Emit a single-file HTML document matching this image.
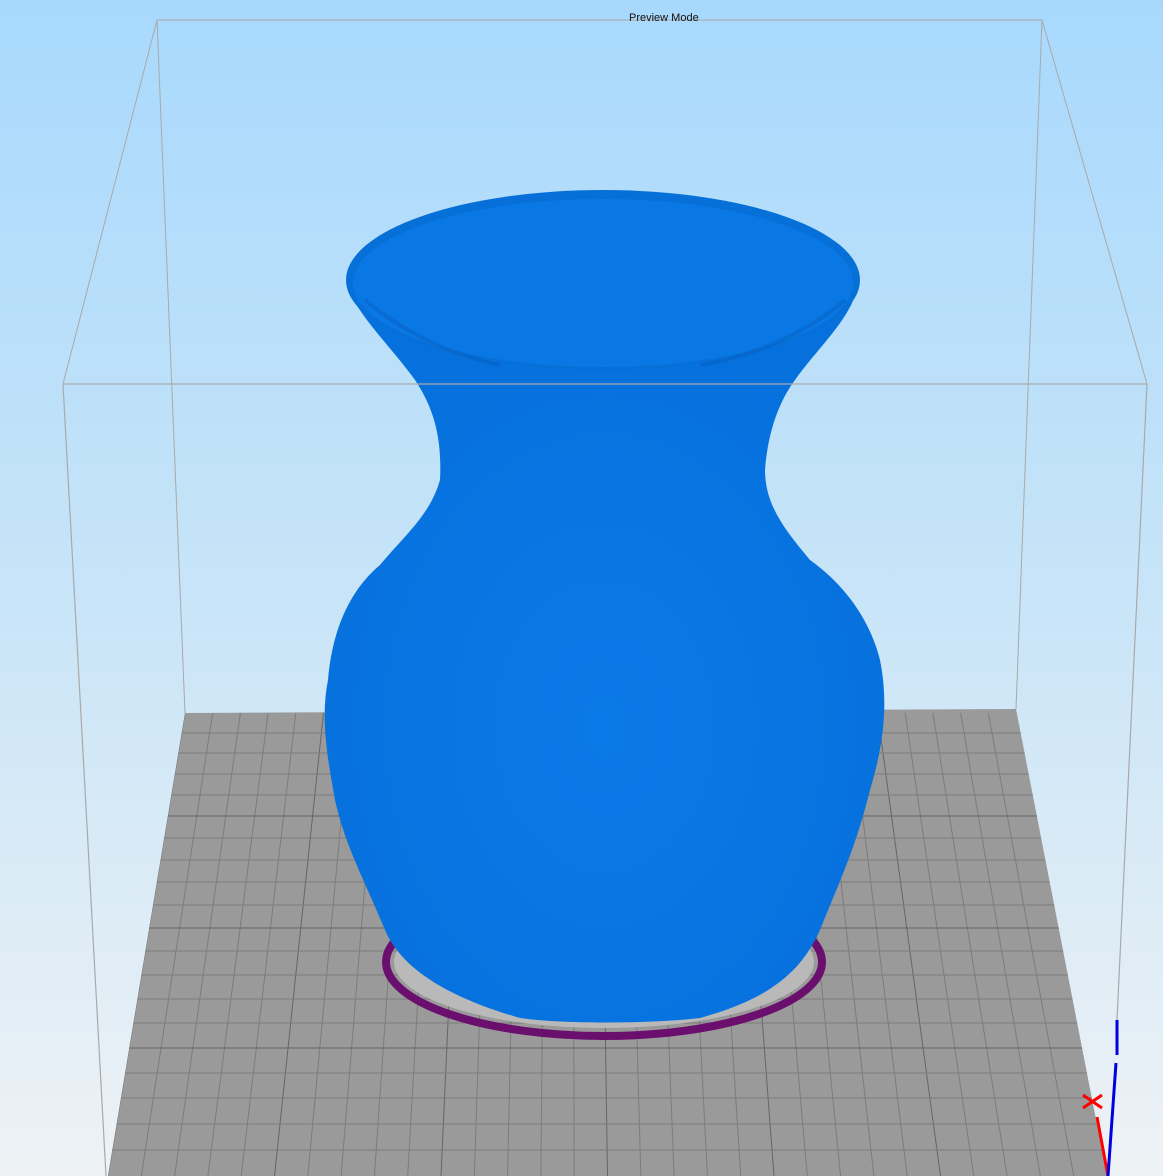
<!DOCTYPE html>
<html><head><meta charset="utf-8"><style>
html,body{margin:0;padding:0;width:1163px;height:1176px;overflow:hidden}
body{background:linear-gradient(#a8d9fd 0%,#c4e3f8 45%,#eef2f5 100%);font-family:"Liberation Sans",sans-serif}
svg{position:absolute;left:0;top:0}
.t{position:absolute;top:12px;left:629px;font-size:11px;color:#111}
</style></head><body>
<svg width="1163" height="1176" viewBox="0 0 1163 1176">
<defs>
<clipPath id="bed"><polygon points="185,713 1016,709 1107,1176 108,1176"/></clipPath>
<radialGradient id="vg" cx="0.5" cy="0.6" r="0.6"><stop offset="0" stop-color="#0a7ae8"/><stop offset="1" stop-color="#0670dc"/></radialGradient>
</defs>
<g stroke="#a9a9a9" stroke-width="1" fill="none">
<line x1="157" y1="20" x2="1042" y2="20"/>
<line x1="157" y1="20" x2="185" y2="713"/>
<line x1="1042" y1="20" x2="1016" y2="709"/>
<line x1="157" y1="20" x2="63" y2="384"/>
<line x1="1042" y1="20" x2="1147" y2="384"/>
</g>
<polygon points="185,713 1016,709 1107,1176 108,1176" fill="#9a9a9a"/>
<g clip-path="url(#bed)" stroke="#7c7c7c" stroke-width="1">
<line x1="185" y1="713" x2="108" y2="1176"/><line x1="212.7" y1="713" x2="141.3" y2="1176"/><line x1="240.4" y1="713" x2="174.6" y2="1176"/><line x1="268.1" y1="713" x2="207.9" y2="1176"/><line x1="295.8" y1="713" x2="241.2" y2="1176"/><line x1="323.5" y1="713" x2="274.5" y2="1176" stroke="#666"/><line x1="351.2" y1="713" x2="307.8" y2="1176"/><line x1="378.9" y1="713" x2="341.1" y2="1176"/><line x1="406.6" y1="713" x2="374.4" y2="1176"/><line x1="434.3" y1="713" x2="407.7" y2="1176"/><line x1="462" y1="713" x2="441" y2="1176" stroke="#666"/><line x1="489.7" y1="713" x2="474.3" y2="1176"/><line x1="517.4" y1="713" x2="507.6" y2="1176"/><line x1="545.1" y1="713" x2="540.9" y2="1176"/><line x1="572.8" y1="713" x2="574.2" y2="1176"/><line x1="600.5" y1="713" x2="607.5" y2="1176" stroke="#666"/><line x1="628.2" y1="713" x2="640.8" y2="1176"/><line x1="655.9" y1="713" x2="674.1" y2="1176"/><line x1="683.6" y1="713" x2="707.4" y2="1176"/><line x1="711.3" y1="713" x2="740.7" y2="1176"/><line x1="739" y1="713" x2="774" y2="1176" stroke="#666"/><line x1="766.7" y1="713" x2="807.3" y2="1176"/><line x1="794.4" y1="713" x2="840.6" y2="1176"/><line x1="822.1" y1="713" x2="873.9" y2="1176"/><line x1="849.8" y1="713" x2="907.2" y2="1176"/><line x1="877.5" y1="713" x2="940.5" y2="1176" stroke="#666"/><line x1="905.2" y1="713" x2="973.8" y2="1176"/><line x1="932.9" y1="713" x2="1007.1" y2="1176"/><line x1="960.6" y1="713" x2="1040.4" y2="1176"/><line x1="988.3" y1="713" x2="1073.7" y2="1176"/>
<line x1="100" y1="733" x2="1110" y2="733"/><line x1="100" y1="753" x2="1110" y2="753"/><line x1="100" y1="774" x2="1110" y2="774"/><line x1="100" y1="795" x2="1110" y2="795"/><line x1="100" y1="816" x2="1110" y2="816" stroke="#666"/><line x1="100" y1="838" x2="1110" y2="838"/><line x1="100" y1="860" x2="1110" y2="860"/><line x1="100" y1="882" x2="1110" y2="882"/><line x1="100" y1="905" x2="1110" y2="905"/><line x1="100" y1="928" x2="1110" y2="928" stroke="#666"/><line x1="100" y1="951" x2="1110" y2="951"/><line x1="100" y1="975" x2="1110" y2="975"/><line x1="100" y1="999" x2="1110" y2="999"/><line x1="100" y1="1023" x2="1110" y2="1023"/><line x1="100" y1="1048" x2="1110" y2="1048" stroke="#666"/><line x1="100" y1="1073" x2="1110" y2="1073"/><line x1="100" y1="1098" x2="1110" y2="1098"/><line x1="100" y1="1124" x2="1110" y2="1124"/><line x1="100" y1="1150" x2="1110" y2="1150"/>
</g>
<ellipse cx="604" cy="962" rx="218" ry="74" fill="none" stroke="#6b0f6e" stroke-width="8"/>
<ellipse cx="604" cy="962" rx="210" ry="66" fill="#b9b9b9"/>
<path d="M347,282 C352,310 390,345 415,380 C435,410 442,440 440,480 C430,515 405,535 380,565 C350,590 332,630 328,680 C320,720 328,760 335,800 C345,845 362,875 385,930 C400,965 440,995 520,1018 C560,1024 650,1024 700,1018 C765,1000 800,975 820,930 C840,880 855,850 870,790 C885,740 888,700 880,660 C870,620 845,585 810,560 C785,530 765,505 765,470 C768,430 780,400 795,380 C820,345 855,315 858,282 Z" fill="url(#vg)"/>
<ellipse cx="603" cy="280" rx="257" ry="90" fill="#0670d8"/>
<ellipse cx="603" cy="283" rx="250" ry="84" fill="#0a78e4"/>
<path d="M365,300 C400,330 450,355 500,365 M700,365 C760,355 810,330 845,300" stroke="#0560c0" stroke-width="4" fill="none" opacity=".5"/>
<g stroke="#a9a9a9" stroke-width="1.2" fill="none">
<line x1="63" y1="384" x2="1147" y2="384"/>
<line x1="63" y1="384" x2="106" y2="1176"/>
<line x1="1147" y1="384" x2="1117" y2="1020"/>
</g>
<line x1="1097" y1="1117" x2="1108" y2="1176" stroke="#f00" stroke-width="3"/>
<path d="M1083,1095 L1102,1108 M1083,1108 L1102,1095" stroke="#f00" stroke-width="3"/>
<line x1="1116" y1="1063" x2="1108" y2="1176" stroke="#0000e0" stroke-width="3"/>
<line x1="1117" y1="1020" x2="1117" y2="1055" stroke="#0000e0" stroke-width="3"/>
</svg>
<div class="t">Preview Mode</div>
</body></html>
